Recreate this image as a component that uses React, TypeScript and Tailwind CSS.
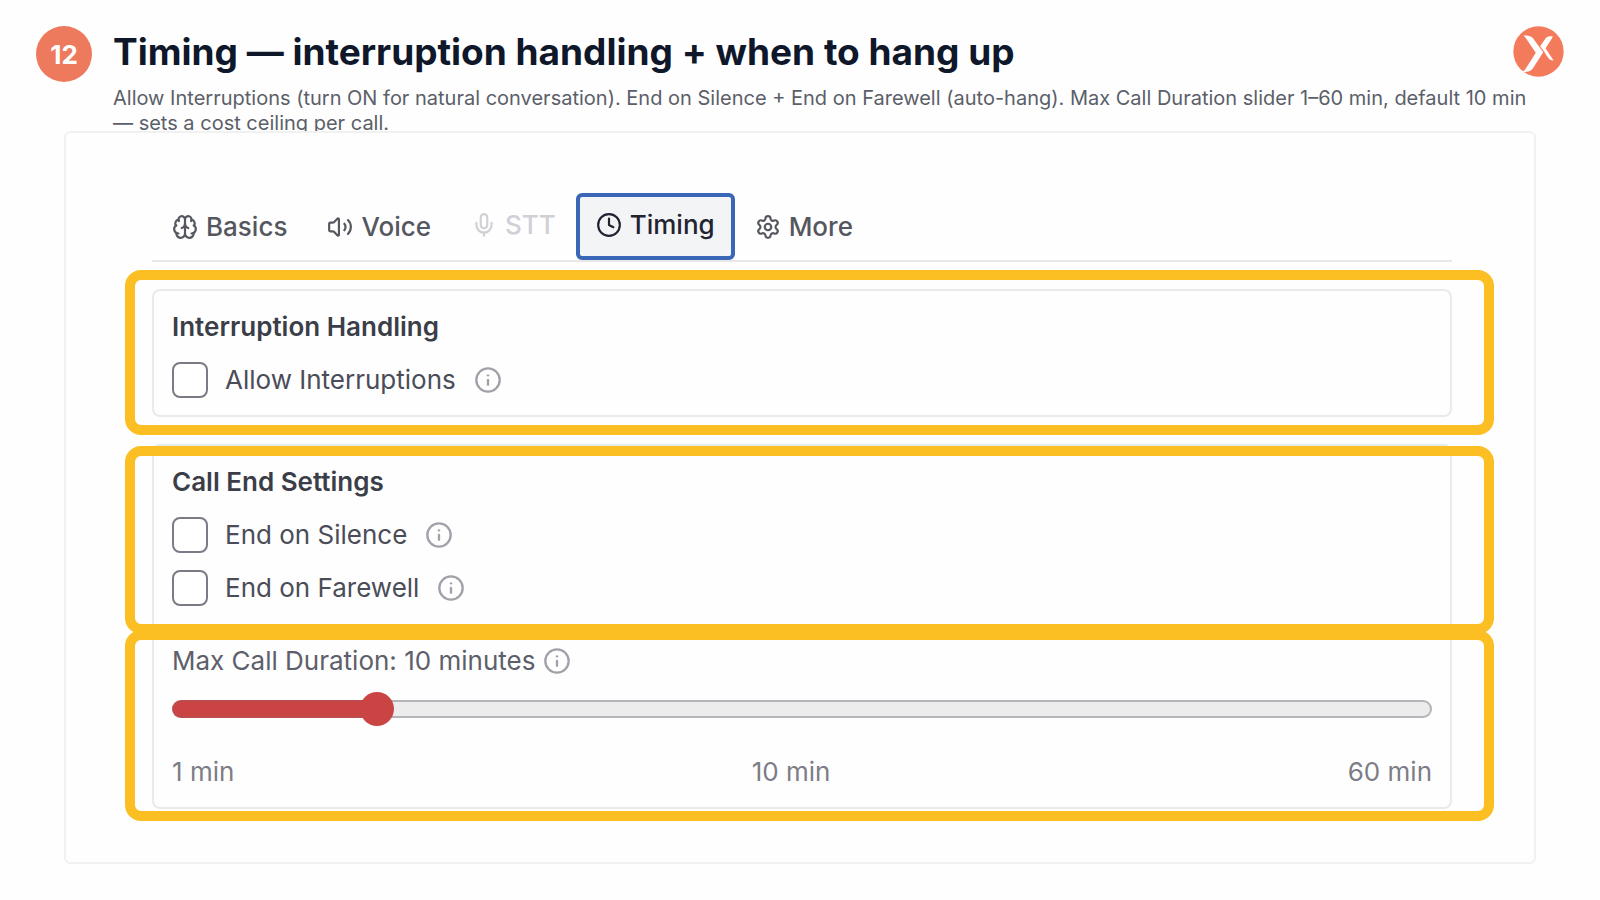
import { useState } from "react";
import type { CSSProperties, ReactNode } from "react";
import { Brain, Clock, Info, Mic, Settings, Volume2 } from "lucide-react";

function Logo() {
  return (
    <svg viewBox="0 0 152 152" className="size-[51px] shrink-0" role="img" aria-label="Logo">
      <circle cx="76" cy="76" r="75" fill="#f47a5c" />
      <path
        d="M31 28 C43 28 53 28 59 36 L90 78 L60 125 C53 135 42 138 28 137 C32 134 35 132 38 127 L68 80 L45 46 C40 38 37 33 31 28 Z"
        fill="#fff"
      />
      <path
        d="M119 31 C109 30 102 31 98 36 L81 60 L93 77 L102 91 C107 99 112 103 121 103 L97 66 L113 42 C116 37 117 34 119 31 Z"
        fill="#fff"
      />
    </svg>
  );
}

function Highlight({ overhang = false }: { overhang?: boolean }) {
  return (
    <div
      aria-hidden="true"
      className={`pointer-events-none absolute top-0 -left-[27px] -right-[42px] rounded-2xl border-10 border-[#fbbf24] ${
        overhang ? "-bottom-[14px]" : "bottom-0"
      }`}
    />
  );
}

function InfoButton({ label }: { label: string }) {
  return (
    <button type="button" aria-label={label} className="text-[#a1a1aa]">
      <Info className="size-7" strokeWidth={2} />
    </button>
  );
}

function CheckRow({ id, label }: { id: string; label: string }) {
  return (
    <div className="flex h-9 items-center">
      <input
        id={id}
        type="checkbox"
        className="size-9 appearance-none rounded-lg border-2 border-[#7b7b86] bg-white checked:bg-[#cb4444]"
      />
      <label htmlFor={id} className="ml-[17px] mr-[18px] text-[26px] leading-9 text-[#4a4d57]">
        {label}
      </label>
      <InfoButton label={`About ${label}`} />
    </div>
  );
}

function Tab({
  icon,
  label,
  active = false,
  disabled = false,
}: {
  icon: ReactNode;
  label: string;
  active?: boolean;
  disabled?: boolean;
}) {
  const tone = active
    ? "rounded-md border-4 border-[#3a66b8] bg-[#f3f4f6] text-[#1f2430] pb-1"
    : disabled
      ? "border-4 border-transparent text-[#d0d0d7] pb-1"
      : "border-4 border-transparent text-[#55575f]";
  return (
    <button
      type="button"
      role="tab"
      aria-selected={active}
      disabled={disabled}
      className={`flex h-[67px] items-center gap-2 px-4 text-[26px] font-medium ${tone}`}
    >
      {icon}
      {label}
    </button>
  );
}

export default function App() {
  const [minutes, setMinutes] = useState(10);
  const fill = { "--fill": `${((minutes - 1) / 59) * 100}%` } as CSSProperties;

  return (
    <main className="min-h-screen bg-[#fefefe] pb-[34px] font-['Inter','Liberation_Sans',sans-serif]">
      <header className="px-9 pt-[26px]">
        <div className="flex h-[60px] items-start gap-[21px]">
          <div className="flex size-14 shrink-0 items-center justify-center rounded-full bg-[#ee7a5e] text-[26px] font-bold text-white">
            12
          </div>
          <h1 className="min-w-0 flex-1 text-[37px] font-bold leading-[52px] text-[#0f172a]">
            Timing — interruption handling + when to hang up
          </h1>
          <Logo />
        </div>
        <p className="pl-[77px] pr-6 text-[20px] leading-[25px] text-[#5b5f69]">
          Allow Interruptions (turn ON for natural conversation). End on Silence + End on Farewell
          (auto-hang). Max Call Duration slider 1–60 min, default 10 min — sets a cost ceiling per
          call.
        </p>
      </header>

      <section className="relative mx-16 -mt-[5px] rounded-md border-2 border-[#f0f1f1] bg-[#fefefe] pb-[53px] pl-[86px] pr-[82px] pt-[60px]">
        <div role="tablist" className="flex border-b-2 border-[#e8e8ea]">
          <Tab icon={<Brain className="size-[26px]" />} label="Basics" />
          <Tab icon={<Volume2 className="size-[26px]" />} label="Voice" />
          <Tab icon={<Mic className="size-[26px]" />} label="STT" disabled />
          <Tab icon={<Clock className="size-[26px]" />} label="Timing" active />
          <Tab icon={<Settings className="size-[26px]" />} label="More" />
        </div>

        <div className="relative mt-2 pb-[18px] pt-[19px]">
          <fieldset className="rounded-lg border-2 border-[#e9eaeb] px-[18px] pb-[17px] pt-[18px]">
            <h2 className="mb-[17px] text-[26px] font-semibold leading-9 text-[#3b3e48]">
              Interruption Handling
            </h2>
            <CheckRow id="allow-interruptions" label="Allow Interruptions" />
          </fieldset>
          <Highlight />
        </div>

        <div className="mt-[9px] rounded-lg border-2 border-[#e9eaeb]">
          <div className="relative -mx-0.5 px-5 pb-7 pt-[18px]">
            <h2 className="mb-[17px] text-[26px] font-semibold leading-9 text-[#3b3e48]">
              Call End Settings
            </h2>
            <div className="flex flex-col gap-[17px]">
              <CheckRow id="end-on-silence" label="End on Silence" />
              <CheckRow id="end-on-farewell" label="End on Farewell" />
            </div>
            <Highlight />
          </div>
          <div className="relative -mx-0.5 -mt-1 px-5 pb-[17px] pt-[13px]">
            <div className="flex h-9 items-center gap-2">
              <label htmlFor="max-duration" className="text-[26px] leading-9 text-[#5d606a]">
                Max Call Duration: {minutes} minutes
              </label>
              <InfoButton label="About Max Call Duration" />
            </div>
            <input
              id="max-duration"
              type="range"
              min={1}
              max={60}
              value={minutes}
              onChange={(e) => setMinutes(Number(e.target.value))}
              style={fill}
              className="mt-[13px] block h-[34px] w-full appearance-none bg-transparent [&::-webkit-slider-runnable-track]:h-[18px] [&::-webkit-slider-runnable-track]:rounded-full [&::-webkit-slider-runnable-track]:border-2 [&::-webkit-slider-runnable-track]:border-transparent [&::-webkit-slider-runnable-track]:[background:linear-gradient(to_right,#cb4444_var(--fill),#ececec_var(--fill))_padding-box,linear-gradient(to_right,#bb4b4c_var(--fill),#b4b5bb_var(--fill))_border-box] [&::-webkit-slider-thumb]:mt-[-10px] [&::-webkit-slider-thumb]:size-[34px] [&::-webkit-slider-thumb]:appearance-none [&::-webkit-slider-thumb]:rounded-full [&::-webkit-slider-thumb]:bg-[#cb4444]"
            />
            <div className="mt-7 flex justify-between text-[26px] leading-9 text-[#7c7d86]">
              <span>1 min</span>
              <span>10 min</span>
              <span>60 min</span>
            </div>
            <Highlight overhang />
          </div>
        </div>
      </section>
    </main>
  );
}
